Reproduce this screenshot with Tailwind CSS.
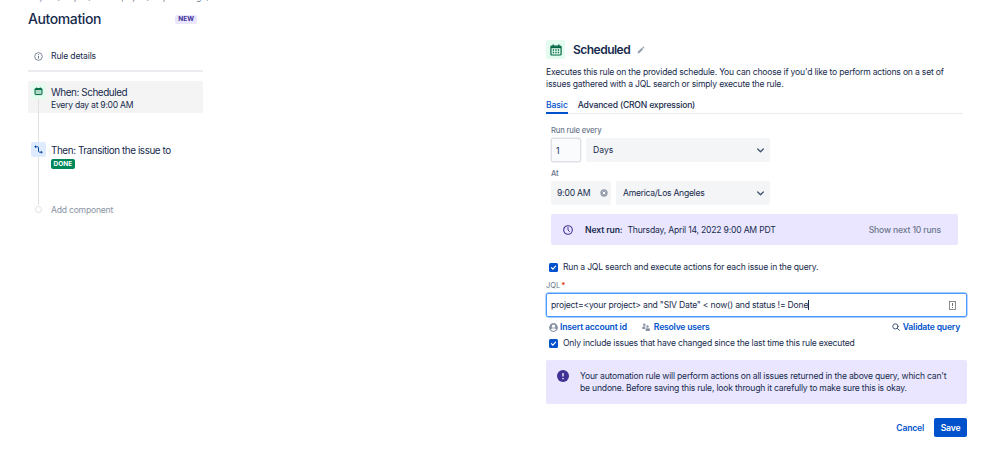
<!DOCTYPE html>
<html lang="en">

<head>
    <meta charset="UTF-8">
    <meta name="viewport" content="width=device-width, initial-scale=1.0">
    <title>Automation</title>
    <script src="https://cdn.jsdelivr.net/npm/@tailwindcss/browser@4"></script>
</head>

<body class="bg-white h-screen overflow-hidden font-[Inter,sans-serif] text-[8.6px] leading-3 tracking-[-0.2px] text-[#172b4d] whitespace-nowrap">

    <div class="flex h-[453px]">

        <!-- rule chain -->
        <aside class="w-[175px] ml-7 shrink-0">
            <div class="h-[2px] flex items-end text-[#6b778c] tracking-[-0.6px]"><span class="leading-[10px]">Projects / Project / Service project / Project settings /</span></div>

            <div class="mt-2 h-[18px] flex items-center justify-between pr-[6px]">
                <h1 class="text-[14px] font-medium tracking-[-0.4px]">Automation</h1>
                <span class="h-[9px] px-[3px] rounded-xs bg-[#eae6ff] text-[#403294] text-[6.5px] leading-[9px] font-bold tracking-normal">NEW</span>
            </div>

            <div class="mt-[19px] h-[18px] pl-[6px] flex items-center">
                <svg class="size-[9px] text-[#5e6c84]" viewBox="0 0 9 9" fill="none" stroke="currentColor">
                    <circle cx="4.5" cy="4.5" r="3.8" stroke-width=".8" />
                    <path d="M4.5 4v2.6M4.5 2.3v.9" stroke-width=".9" />
                </svg>
                <span class="ml-[8px] tracking-[-0.15px]">Rule details</span>
            </div>
            <div class="mt-[5px] h-[2px] bg-[#ebecf0]"></div>

            <div class="relative mt-[9px]">
                <div class="h-8 pl-[3px] pt-[3px] flex rounded-xs bg-[#f4f4f4]">
                    <div class="size-[15px] rounded-xs bg-[#e3fcef] flex items-center justify-center">
                        <svg class="size-[9px] text-[#006644]" viewBox="0 0 9 9" fill="none" stroke="currentColor">
                            <rect x="1" y="1.6" width="7" height="6" rx=".6" fill="#abd9c4" />
                            <path d="M1 2.4h7M2.7.5v1.6M6.3.5v1.6" />
                        </svg>
                    </div>
                    <div class="ml-[5px] pt-[1px]">
                        <div class="text-[9.9px] leading-[14px] tracking-[-0.42px]">When: Scheduled</div>
                        <div class="leading-3 tracking-[-0.26px]">Every day at 9:00 AM</div>
                    </div>
                </div>
                <!-- connectors -->
                <div class="absolute left-[10px] top-[18px] w-px h-11 bg-[#dfe1e6]"></div>
                <div class="absolute left-[10px] top-[76px] w-px h-12 bg-[#dfe1e6]"></div>

                <div class="mt-[29px] h-[29px] pl-[3px] flex">
                    <div class="size-[15px] rounded-xs bg-[#deebff] flex items-center justify-center">
                        <svg class="size-[9px] text-[#0747a6]" viewBox="0 0 9 9" fill="none" stroke="currentColor">
                            <path d="M1.500 1.700h2q1 0 1 1v3.500q0 1 1 1h2" />
                            <path d="M.4 1.700L2 .5v2.400zM8.600 7.200L7 6v2.400z" fill="currentColor" stroke-width=".3" />
                        </svg>
                    </div>
                    <div class="ml-[5px] flex flex-col items-start">
                        <span class="text-[9.9px] leading-4 tracking-[-0.42px]">Then: Transition the issue to</span>
                        <span class="mt-px h-[10px] px-[2.500px] rounded-xs bg-[#00875a] text-white text-[6.5px] leading-[10px] font-bold tracking-normal">DONE</span>
                    </div>
                </div>

                <div class="mt-[32px] h-[12px] pl-[7px] flex items-center text-[#8993a4]">
                    <span class="size-[7px] rounded-full border border-[#dfe1e6] bg-white"></span>
                    <span class="ml-[9px] pt-px tracking-[-0.22px]">Add component</span>
                </div>
            </div>
        </aside>

        <!-- trigger form -->
        <main class="w-[421px] ml-[343px] shrink-0 pt-10">
            <div class="h-[19px] flex items-center">
                <div class="size-[19px] rounded-xs bg-[#e3fcef] flex items-center justify-center">
                    <svg class="size-3 text-[#006644]" viewBox="0 0 12 12" fill="none" stroke="currentColor">
                        <rect x=".9" y="2" width="10.2" height="9" rx="1" stroke-width="1.2" />
                        <path d="M1 3.2h10" stroke-width="2" />
                        <path d="M3.2.4v2M8.8.4v2" stroke-width="1.3" />
                        <path d="M2.8 6h6.8M2.8 8.5h6.8" stroke-width="1.3" stroke-dasharray="1.3 1.2" />
                    </svg>
                </div>
                <h2 class="ml-[8px] text-[12px] font-semibold tracking-[-0.52px]">Scheduled</h2>
                <svg class="ml-[7px] size-2 text-[#97a0af]" viewBox="0 0 8 8" fill="currentColor">
                    <path d="M.5 7.5l.5-2L4.700 1.800l1.500 1.500L2.500 7zM5.200 1.300l.6-.6q.4-.3.8 0l.7.7q.3.4 0 .8l-.6.6z" />
                </svg>
            </div>

            <p class="mt-[7px]">Executes this rule on the provided schedule. You can choose if you'd like to perform actions on a set of<br>issues gathered with a JQL search or simply execute the rule.</p>

            <div class="mt-[6px] mr-1 h-[18px] flex gap-[10px] border-b border-[#ebecf0] leading-[18px] font-medium">
                <span class="h-[18px] border-b-2 border-[#0052cc] text-[#0052cc] tracking-[-0.1px]">Basic</span>
                <span>Advanced (CRON expression)</span>
            </div>

            <div class="pl-[5px] pr-[9px]">
                <div class="mt-[11px] text-[7.6px] font-medium text-[#6b778c] tracking-[-0.14px]">Run rule every</div>
                <div class="mt-px flex gap-[5px] h-6">
                    <div class="w-[30px] pl-1 rounded-xs border border-[#dfe1e6] bg-[#fafbfc] shadow-[0_0_0_0.4px_#dfe1e6] leading-6">1</div>
                    <div class="w-[184px] pl-[7px] pr-[5px] rounded-xs bg-[#f4f5f7] flex items-center justify-between">
                        <span class="tracking-normal">Days</span>
                        <svg class="size-[9px]" viewBox="0 0 9 9" fill="none" stroke="#42526e" stroke-width="1.3" stroke-linecap="round" stroke-linejoin="round"><path d="M1.700 3l2.800 2.800L7.300 3" /></svg>
                    </div>
                </div>
                <div class="mt-[6px] text-[7.6px] font-medium text-[#6b778c]">At</div>
                <div class="mt-px flex gap-[5px] h-6">
                    <div class="w-[60px] pl-[6px] pr-[3px] rounded-xs bg-[#f4f5f7] flex items-center justify-between">
                        <span>9:00 AM</span>
                        <svg class="size-2" viewBox="0 0 8 8"><circle cx="4" cy="4" r="3.7" fill="#97a0af" /><path d="M2.7 2.7l2.600 2.600M5.300 2.700L2.700 5.300" stroke="#fff" /></svg>
                    </div>
                    <div class="w-[154px] pl-[7px] pr-[5px] rounded-xs bg-[#f4f5f7] flex items-center justify-between">
                        <span class="tracking-[-0.28px]">America/Los Angeles</span>
                        <svg class="size-[9px]" viewBox="0 0 9 9" fill="none" stroke="#42526e" stroke-width="1.3" stroke-linecap="round" stroke-linejoin="round"><path d="M1.700 3l2.800 2.800L7.300 3" /></svg>
                    </div>
                </div>

                <div class="mt-[9px] h-[31px] pl-3 pr-[17px] rounded-xs bg-[#eae6ff] flex items-center">
                    <svg class="size-[10px]" viewBox="0 0 10 10" fill="none" stroke="#403294" stroke-linecap="round"><circle cx="5" cy="5" r="4.3" stroke-width="1.1" /><path d="M5 2.5V5l1.5 1.5" /></svg>
                    <span class="ml-3 font-semibold tracking-[-0.1px]">Next run:</span>
                    <span class="ml-[5px]">Thursday, April 14, 2022 9:00 AM PDT</span>
                    <span class="ml-auto font-medium text-[#6b778c] tracking-[-0.16px]">Show next 10 runs</span>
                </div>
            </div>

            <div class="mt-4 pl-[3px] h-3 flex items-center">
                <svg class="size-[9px]" viewBox="0 0 9 9" fill="none"><rect width="9" height="9" rx="1.5" fill="#0052cc" /><path d="M2.4 4.6l1.5 1.5 2.7-3" stroke="#fff" stroke-width="1.2" stroke-linecap="round" /></svg>
                <span class="ml-[5px]">Run a JQL search and execute actions for each issue in the query.</span>
            </div>

            <div class="mt-[7px] h-3 flex text-[7.5px] text-[#6b778c] tracking-normal"><span>JQL</span><span class="ml-px text-[#de350b] font-bold">*</span></div>
            <div class="mt-px h-6 pl-1 pr-[10px] rounded-xs border border-[#4c9aff] shadow-[0_0_0_0.4px_#4c9aff] flex items-center">
                <span>project=&lt;your project&gt; and "SIV Date" &lt; now() and status != Done</span>
                <span class="w-px h-[10px] bg-[#172b4d]"></span>
                <svg class="ml-auto w-[7px] h-[9px]" viewBox="0 0 7 9" fill="none" stroke="#6f6f6f"><rect x=".5" y=".5" width="6" height="8" stroke-width=".8" /><path d="M3.5 2v3M3.5 6v1" /></svg>
            </div>

            <div class="mt-1 h-3 pl-[3px] pr-[7px] flex items-center font-semibold text-[#0052cc]">
                <svg class="size-[9px]" viewBox="0 0 8 8"><circle cx="4" cy="4" r="3.900" fill="#8993a4" /><circle cx="4" cy="2.8" r="1.4" fill="#fff" /><path d="M1.7 6q0-1.4 2.3-1.4T6.300 6Q4 8 1.7 6z" fill="#fff" /></svg>
                <span class="ml-[2px] tracking-[-0.17px]">Insert account id</span>
                <svg class="ml-[15px] size-2" viewBox="0 0 8 8" fill="#8993a4"><circle cx="2.300" cy="1.700" r="1.300" /><path d="M.3 6V4.500q0-1 1-1h2V6z" /><circle cx="5.500" cy="3.500" r="1.200" /><path d="M3.700 8V6.200q0-1 1-1H7q.9 0 .9 1V8z" /></svg>
                <span class="ml-[4px]">Resolve users</span>
                <svg class="ml-auto size-2" viewBox="0 0 8 8" fill="none" stroke="#42526e" stroke-linecap="round"><circle cx="3.400" cy="3.400" r="2.600" /><path d="M5.400 5.400l2 2" /></svg>
                <span class="ml-[3px]">Validate query</span>
            </div>

            <div class="mt-1 pl-[3px] h-3 flex items-center">
                <svg class="size-[9px]" viewBox="0 0 9 9" fill="none"><rect width="9" height="9" rx="1.5" fill="#0052cc" /><path d="M2.4 4.6l1.5 1.5 2.7-3" stroke="#fff" stroke-width="1.2" stroke-linecap="round" /></svg>
                <span class="ml-[5px]">Only include issues that have changed since the last time this rule executed</span>
            </div>

            <div class="mt-[11px] h-11 pl-[11px] pt-[10px] rounded-xs bg-[#eae6ff] flex items-start">
                <svg class="size-3" viewBox="0 0 12 12"><circle cx="6" cy="6" r="6" fill="#403294" /><path d="M6 3v3.500M6 8v1.200" stroke="#fff" stroke-width="1.300" /></svg>
                <p class="ml-[11px]">Your automation rule will perform actions on all issues returned in the above query, which can't<br>be undone. Before saving this rule, look through it carefully to make sure this is okay.</p>
            </div>

            <div class="mt-[14px] flex justify-end font-semibold">
                <button class="mr-[10px] text-[#0052cc]">Cancel</button>
                <button class="w-[33px] h-[19px] rounded-xs bg-[#0052cc] text-white">Save</button>
            </div>
        </main>
    </div>

</body>

</html>
